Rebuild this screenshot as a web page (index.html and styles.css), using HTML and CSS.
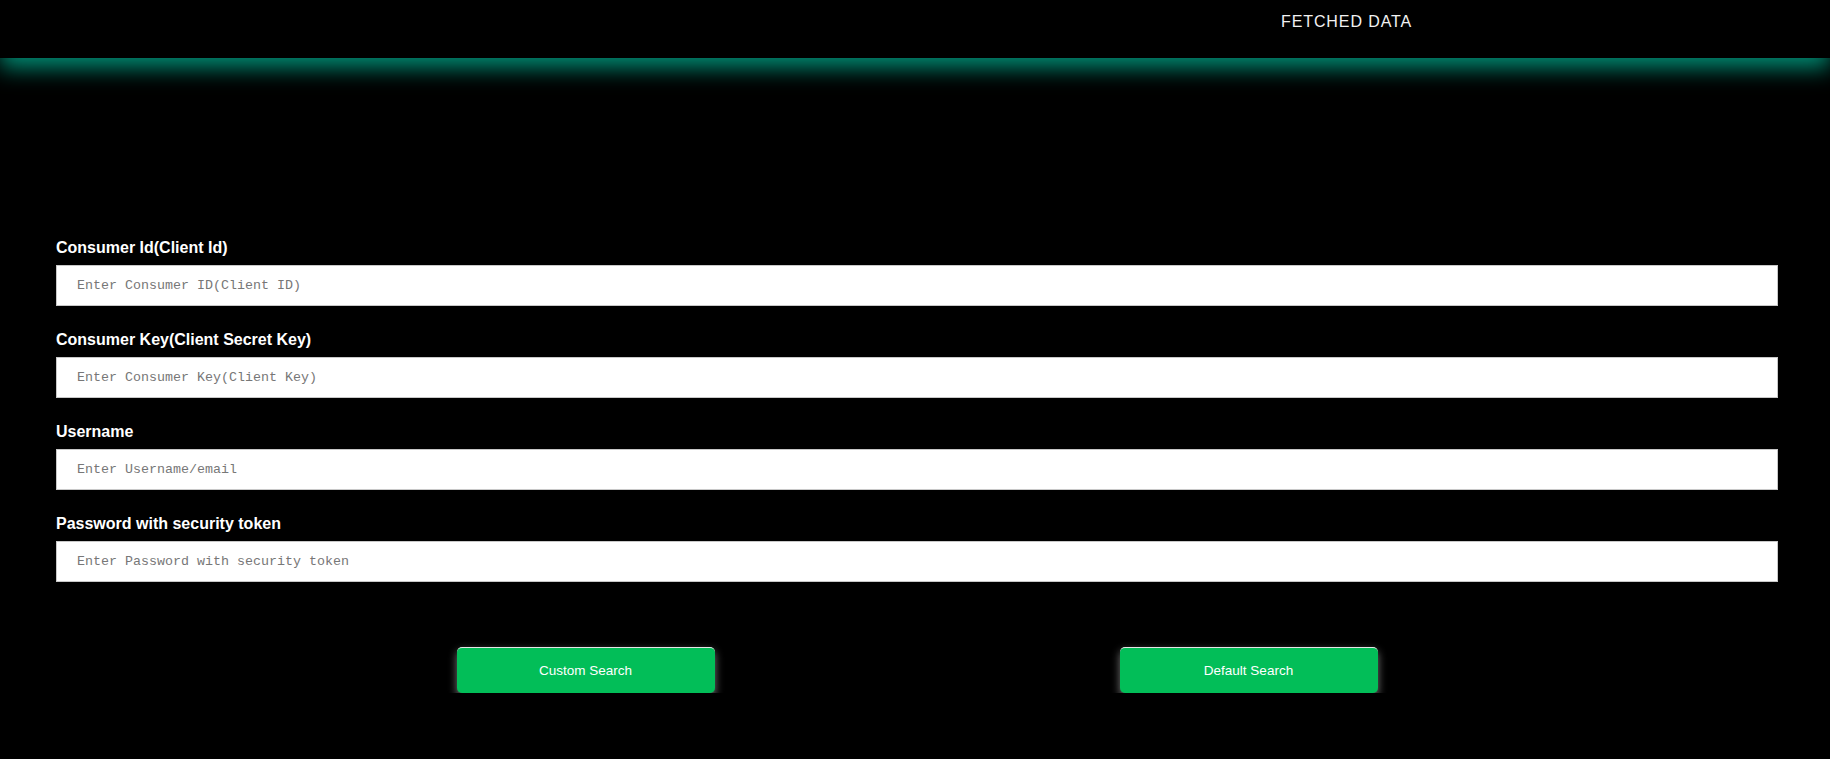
FILE: index.html
```html
<!DOCTYPE html>
<html>
<head>
<meta charset="utf-8">
<link rel="stylesheet" href="styles.css">
</head>
<body>
<header class="topbar">
  <nav class="nav"><a class="nav-link">FETCHED DATA</a></nav>
</header>
<main class="form">
  <div class="field">
    <label class="label">Consumer Id(Client Id)</label>
    <input class="input" type="text" placeholder="Enter Consumer ID(Client ID)">
  </div>
  <div class="field">
    <label class="label">Consumer Key(Client Secret Key)</label>
    <input class="input" type="text" placeholder="Enter Consumer Key(Client Key)">
  </div>
  <div class="field">
    <label class="label">Username</label>
    <input class="input" type="text" placeholder="Enter Username/email">
  </div>
  <div class="field">
    <label class="label">Password with security token</label>
    <input class="input" type="text" placeholder="Enter Password with security token">
  </div>
  <div class="actions">
    <button class="btn">Custom Search</button>
    <button class="btn">Default Search</button>
  </div>
</main>
</body>
</html>
```
FILE: styles.css
```css
html, body {
  margin: 0;
  background: #000;
  overflow: hidden;
}
body {
  font-family: "Liberation Sans", Arial, sans-serif;
  color: #fff;
}
.topbar {
  height: 58px;
  background: #000;
  box-shadow: 0 10px 22px #008a72;
  position: relative;
  z-index: 1;
}
.nav {
  padding-left: 1281px;
  padding-top: 13px;
}
.nav-link {
  font-size: 16px;
  letter-spacing: 0.9px;
  color: #f2f2f2;
}
.form {
  padding: 181px 52px 0 56px;
  display: flex;
  flex-direction: column;
}
.field {
  display: flex;
  flex-direction: column;
  margin-bottom: 25px;
}
.label {
  font-weight: bold;
  font-size: 16px;
  line-height: 18px;
  margin-bottom: 8px;
}
.input {
  height: 41px;
  box-sizing: border-box;
  border: 1px solid #c8c8c8;
  background: #fff;
  padding: 0 20px;
  font-family: "Liberation Mono", monospace;
  font-size: 13.333px;
  outline: none;
}
.input::placeholder {
  color: #777;
}
.actions {
  display: flex;
  justify-content: center;
  gap: 405px;
  margin-top: 40px;
}
.btn {
  width: 258px;
  height: 46px;
  background: #02be58;
  color: #fff;
  border: none;
  border-top: 1px solid #e6e6e6;
  border-radius: 5px;
  font-family: "Liberation Sans", Arial, sans-serif;
  font-size: 13.5px;
  box-shadow: 0 4px 8px rgba(200, 200, 200, 0.6);
}
```
